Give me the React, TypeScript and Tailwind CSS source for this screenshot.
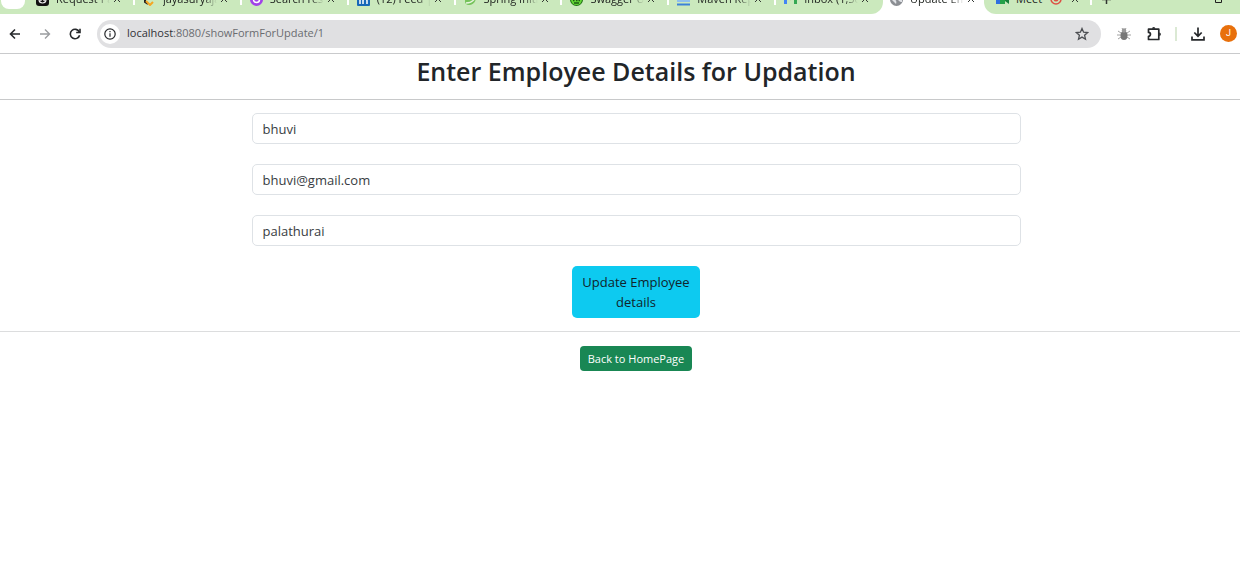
import type { ReactNode } from "react";

type Tab = { title: string; icon: ReactNode };

const disc = (fill: string, inner?: ReactNode) => (
  <svg viewBox="0 0 13 13" className="size-[13px] shrink-0" aria-hidden="true">
    <circle cx="6.5" cy="6.5" r="6.5" fill={fill} />
    {inner}
  </svg>
);

const tile = (inner: ReactNode) => (
  <svg viewBox="0 0 13 13" className="size-[13px] shrink-0" fill="none" aria-hidden="true">
    {inner}
  </svg>
);

const tabs: Tab[] = [
  {
    title: "Request Pa",
    icon: tile(
      <>
        <rect width="13" height="13" rx="3" fill="#111" />
        <circle cx="6.5" cy="6.5" r="3.5" stroke="#eee" strokeWidth="1.2" />
        <path d="M4 5l5 3M4 8l5-3" stroke="#eee" />
      </>,
    ),
  },
  {
    title: "jayasuryajay",
    icon: tile(
      <g strokeWidth="2">
        <path d="M7 1L2 6v3l3 2" stroke="#222" />
        <path d="M3 8l4 4 3-3" stroke="#f5a623" />
        <path d="M6 6h6" stroke="#999" />
      </g>,
    ),
  },
  {
    title: "Search resul",
    icon: disc("#a142e8", <circle cx="6.5" cy="6.5" r="3" fill="none" stroke="#fff" strokeWidth="1.5" />),
  },
  {
    title: "(12) Feed | L",
    icon: tile(
      <>
        <rect width="13" height="13" rx="1" fill="#1768b8" />
        <path d="M3 5v6M6 11V5m0 3c0-3 4-3 4 0v3" stroke="#fff" strokeWidth="1.5" />
      </>,
    ),
  },
  {
    title: "Spring Initia",
    icon: tile(
      <>
        <path d="M12 1c1 8-3 11-7 11C1 12 0 8 2 5c2-3 8-1 10-4z" fill="#76c35b" />
        <path d="M2 10c4 0 7-1 9-5" stroke="#e8f5df" strokeWidth="1.3" />
      </>,
    ),
  },
  {
    title: "Swagger UI",
    icon: disc(
      "#1f6f16",
      <>
        <circle cx="6.5" cy="6.5" r="5.5" fill="#63d636" />
        <path d="M3 7.500h1.500M6 7.500h1.500M8.500 7.500H10M4 10h5" stroke="#1d5b13" strokeWidth="1.300" />
      </>,
    ),
  },
  {
    title: "Maven Repo",
    icon: tile(
      <>
        <path d="M0 2h13v7H0z" fill="#8fc0ee" />
        <path d="M0 11.5h13" stroke="#3d82d8" strokeWidth="2" />
      </>,
    ),
  },
  {
    title: "Inbox (1,503)",
    icon: tile(
      <>
        <path d="M0 2h3v9H0z" fill="#4285f4" />
        <path d="M10 2h3v9h-3z" fill="#34a853" />
        <path d="M1 2l5.500 4L12 2" stroke="#ea4335" strokeWidth="2" />
      </>,
    ),
  },
];

const globe = disc("#8b8e93", <path d="M2 7c4-1 5 1 4 4M7 1c-2 3 2 4 5 4v4C9 9 7 7 7 1z" fill="#dfe1e5" />);

const meet = tile(
  <>
    <path d="M0 2h9v9H0z" fill="#24a148" />
    <path d="M0 4h4v7H0z" fill="#2f6fe0" />
    <path d="M9 6l4-3v8L9 8z" fill="#17803a" />
  </>,
);

function TabTitle({ children }: { children: ReactNode }) {
  return (
    <span className="ml-[7px] w-[54px] overflow-hidden text-[11px] leading-4 whitespace-nowrap text-[#202420] [mask-image:linear-gradient(to_right,black_75%,transparent)]">
      {children}
    </span>
  );
}

function CloseTab({ title }: { title: string }) {
  return (
    <button type="button" aria-label={`Close ${title}`} className="ml-1 shrink-0">
      <svg viewBox="0 0 8 8" className="size-1.5 stroke-[#303430]" strokeWidth="1.300" aria-hidden="true">
        <path d="M0 0l8 8M8 0L0 8" />
      </svg>
    </button>
  );
}

function TabStrip() {
  return (
    <div className="flex h-[14px] items-end overflow-hidden bg-white">
      <div className="flex h-[30px] w-[883px] items-center rounded-br-xl bg-[#cbe9bd]">
        <div className="ml-px h-5 w-6 shrink-0 rounded-b-lg bg-white" />
        <div className="ml-[3px] flex min-w-0 grow items-center">
          {tabs.map((tab, i) => (
            <div key={tab.title} className="flex min-w-0 flex-1 items-center pl-2">
              {tab.icon}
              <TabTitle>{tab.title}</TabTitle>
              <CloseTab title={tab.title} />
              {i < tabs.length - 1 && <span className="ml-auto h-3 w-0.5 bg-white" />}
            </div>
          ))}
        </div>
      </div>
      <div className="flex h-[30px] w-[101px] shrink-0 items-center pl-[7px]">
        {globe}
        <TabTitle>Update Em</TabTitle>
        <CloseTab title="Update Em" />
      </div>
      <div className="flex h-[30px] grow items-center rounded-bl-xl bg-[#cbe9bd] pr-[18px] pl-3">
        {meet}
        <span className="ml-[7px] w-8 text-[11px] leading-4 text-[#202420]">Meet</span>
        <svg viewBox="0 0 12 12" className="ml-0.5 size-3" fill="none" aria-hidden="true">
          <circle cx="6" cy="6" r="5" stroke="#dd5144" strokeWidth="1.5" />
          <circle cx="6" cy="6" r="2.500" fill="#dd5144" />
        </svg>
        <span className="ml-1.5 flex">
          <CloseTab title="Meet" />
        </span>
        <span className="ml-3 h-3 w-0.5 bg-white" />
        <button type="button" aria-label="New tab" className="ml-2.5">
          <svg viewBox="0 0 9 9" className="size-[9px] stroke-[#303430]" strokeWidth="1.500" aria-hidden="true">
            <path d="M4.500 0v9M0 4.500h9" />
          </svg>
        </button>
        <button type="button" aria-label="Maximize" className="ml-auto">
          <svg viewBox="0 0 7 7" className="size-[7px] fill-none stroke-[#202020]" aria-hidden="true">
            <path d="M.5.5h6v6h-6z" />
          </svg>
        </button>
      </div>
    </div>
  );
}

function Toolbar() {
  return (
    <div className="flex h-10 items-center border-b border-[#c9cacc] pr-[3px] pl-[9px] text-[#26282b]">
      <button type="button" aria-label="Back">
        <svg viewBox="0 0 12 12" className="size-3 fill-none stroke-current" strokeWidth="1.600" aria-hidden="true">
          <path d="M11 6H1.500M6 1.500L1.500 6 6 10.500" />
        </svg>
      </button>
      <button type="button" aria-label="Forward" className="ml-[18px] text-[#9b9da0]">
        <svg viewBox="0 0 12 12" className="size-3 fill-none stroke-current" strokeWidth="1.400" aria-hidden="true">
          <path d="M1 6h9.500M6 1.500L10.500 6 6 10.500" />
        </svg>
      </button>
      <button type="button" aria-label="Reload" className="ml-[18px]">
        <svg viewBox="0 0 12 12" className="size-3 fill-none stroke-current" strokeWidth="1.600" aria-hidden="true">
          <path d="M10.300 4A4.700 4.700 0 1 0 10.600 7.200" />
          <path d="M11 .8v3.700H7.200" />
        </svg>
      </button>
      <div className="ml-4 flex h-7 min-w-0 grow items-center rounded-full bg-[#e0e0e2] pr-3 pl-[3px]">
        <button
          type="button"
          aria-label="Site information"
          className="flex size-5 shrink-0 items-center justify-center rounded-full bg-white"
        >
          <svg viewBox="0 0 12 12" className="size-3 fill-none stroke-current" strokeWidth="1.200" aria-hidden="true">
            <circle cx="6" cy="6" r="5.200" />
            <path d="M6 5.300v3.500M6 3v1.300" />
          </svg>
        </button>
        <a href="#" className="ml-[7px] grow text-[11px] text-[#6a6c70]">
          <span className="text-[#303236]">localhost</span>:8080/showFormForUpdate/1
        </a>
        <button type="button" aria-label="Bookmark this page">
          <svg viewBox="0 0 14 14" className="size-[14px] fill-none stroke-[#4c4e52]" strokeWidth="1.300" aria-hidden="true">
            <path d="M7 1.500l1.600 3.700 4 .4-3 2.700.9 3.900L7 10.100l-3.500 2.100.9-3.900-3-2.700 4-.4z" />
          </svg>
        </button>
      </div>
      <button type="button" aria-label="Bug extension" className="ml-4">
        <svg viewBox="0 0 14 14" className="size-[14px]" aria-hidden="true">
          <path d="M1 4l3 2M13 4l-3 2M0 8h14M1 12l3-2M13 12l-3-2M5 1l1 2M9 1L8 3" stroke="#a2a2a2" fill="none" />
          <ellipse cx="7" cy="8.500" rx="3.500" ry="4.500" fill="#777" />
          <circle cx="7" cy="3.500" r="2.200" fill="#999" />
        </svg>
      </button>
      <button type="button" aria-label="Extensions" className="ml-4">
        <svg viewBox="0 0 15 15" className="size-[15px] fill-none stroke-current" strokeWidth="1.700" aria-hidden="true">
          <path d="M1.500 3.200h10.300v10.300H1.500v-3.200c2.600 0 2.600-3.900 0-3.900z" strokeLinejoin="round" />
          <path d="M5 2.800a1.700 1.700 0 0 1 3.400 0zM12.200 6.500a1.700 1.700 0 0 1 0 3.400z" fill="currentColor" stroke="none" />
        </svg>
      </button>
      <span className="ml-[13px] h-3.5 w-0.5 bg-[#dbe9d4]" />
      <button type="button" aria-label="Downloads" className="ml-3.5">
        <svg viewBox="0 0 14 14" className="size-[14px] fill-none stroke-current" strokeWidth="1.700" aria-hidden="true">
          <path d="M7 .5v8.500M3.300 5.500L7 9.200l3.700-3.700M1 9.500v3.400h12V9.500" />
        </svg>
      </button>
      <button
        type="button"
        aria-label="Profile"
        className="ml-[15px] flex size-[17px] items-center justify-center rounded-full bg-[#e8700c] font-['Roboto',sans-serif] text-[9px] leading-none text-white"
      >
        J
      </button>
    </div>
  );
}

const fields = [
  { label: "Name", type: "text", value: "bhuvi" },
  { label: "Email", type: "email", value: "bhuvi@gmail.com" },
  { label: "Address", type: "text", value: "palathurai" },
];

export default function App() {
  return (
    <div className="min-h-screen bg-white font-['Open_Sans','Noto_Sans',sans-serif] text-[#212529]">
      <TabStrip />
      <Toolbar />
      <main>
        <h1 className="h-[45px] pl-8 text-center text-[25px] leading-[34px] font-semibold">
          Enter Employee Details for Updation
        </h1>
        <hr className="border-[#c8c9ca]" />
        <form className="flex flex-col items-center gap-5 py-[13px] pl-8" onSubmit={(e) => e.preventDefault()}>
          {fields.map((field) => (
            <input
              key={field.label}
              aria-label={field.label}
              type={field.type}
              defaultValue={field.value}
              className="h-[31px] w-full max-w-[769px] rounded-[5px] border border-[#dee2e6] px-2.5 text-[13px] text-[#383c42]"
            />
          ))}
          <button
            type="submit"
            className="w-32 rounded-[5px] bg-[#0dcaf0] px-2.5 py-1.5 text-[13px] leading-5 text-[#10242b]"
          >
            Update Employee details
          </button>
        </form>
        <hr className="border-[#dcddde]" />
        <div className="flex justify-center pt-3.5 pl-8">
          <a href="#" className="rounded bg-[#198754] px-2 py-1 text-[11px] leading-[17px] text-white">
            Back to HomePage
          </a>
        </div>
      </main>
    </div>
  );
}
